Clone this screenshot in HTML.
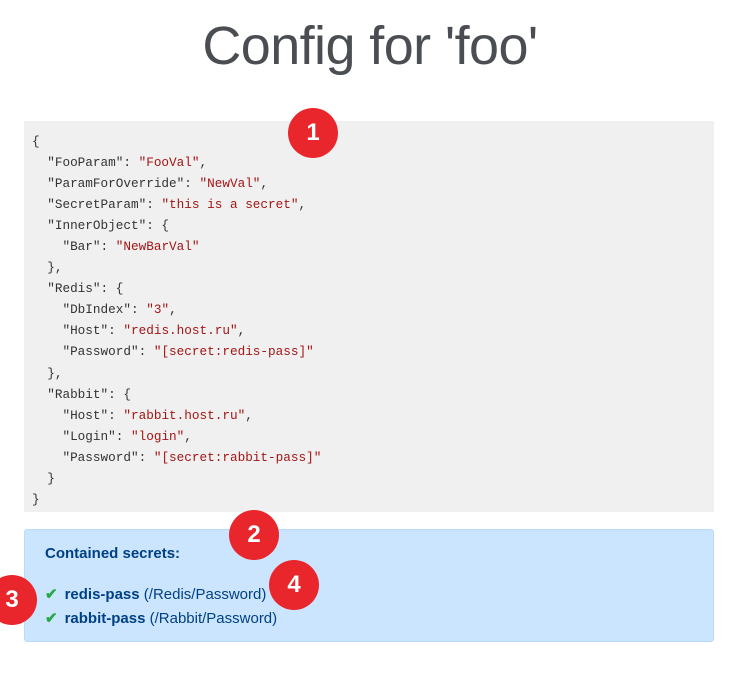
<!DOCTYPE html>
<html><head><meta charset="utf-8"><style>
body{margin:0;width:753px;height:688px;background:#fff;position:relative;overflow:hidden;font-family:"Liberation Sans",sans-serif}
h1{position:absolute;left:0;width:740px;top:16px;margin:0;text-align:center;font-weight:300;font-size:54px;color:#4a4e53;letter-spacing:-0.6px;line-height:60px}
pre{position:absolute;left:24px;top:121px;width:690px;height:391px;margin:0;background:#f0f0f0;font-family:"Liberation Mono",monospace;font-size:12.7px;line-height:21.05px;padding:10px 0 0 8px;box-sizing:border-box;color:#333}
.s{color:#a31515}
.box{position:absolute;left:24px;top:529px;width:690px;height:113px;box-sizing:border-box;background:#cce5ff;border:1px solid #b8daff;border-radius:3px;color:#004085;font-size:15px}
.t{position:absolute;left:20px;top:15px;font-weight:bold}
.i{position:absolute;left:20px}
.ck{color:#28a745;font-weight:bold;margin-right:7px}
.c{position:absolute;width:50px;height:50px;border-radius:50%;background:#e8262b;color:#fff;font-weight:bold;font-size:24px;text-align:center;line-height:50px}
</style></head><body>
<h1>Config for 'foo'</h1>
<pre>{
  "FooParam": <span class="s">"FooVal"</span>,
  "ParamForOverride": <span class="s">"NewVal"</span>,
  "SecretParam": <span class="s">"this is a secret"</span>,
  "InnerObject": {
    "Bar": <span class="s">"NewBarVal"</span>
  },
  "Redis": {
    "DbIndex": <span class="s">"3"</span>,
    "Host": <span class="s">"redis.host.ru"</span>,
    "Password": <span class="s">"[secret:redis-pass]"</span>
  },
  "Rabbit": {
    "Host": <span class="s">"rabbit.host.ru"</span>,
    "Login": <span class="s">"login"</span>,
    "Password": <span class="s">"[secret:rabbit-pass]"</span>
  }
}</pre>
<div class="box">
<div class="t">Contained secrets:</div>
<div class="i" style="top:55px"><span class="ck">✔</span><b>redis-pass</b> (/Redis/Password)</div>
<div class="i" style="top:79px"><span class="ck">✔</span><b>rabbit-pass</b> (/Rabbit/Password)</div>
</div>
<div class="c" style="left:288px;top:108px">1</div>
<div class="c" style="left:229px;top:510px">2</div>
<div class="c" style="left:-13px;top:575px">3</div>
<div class="c" style="left:269px;top:560px">4</div>
</body></html>
